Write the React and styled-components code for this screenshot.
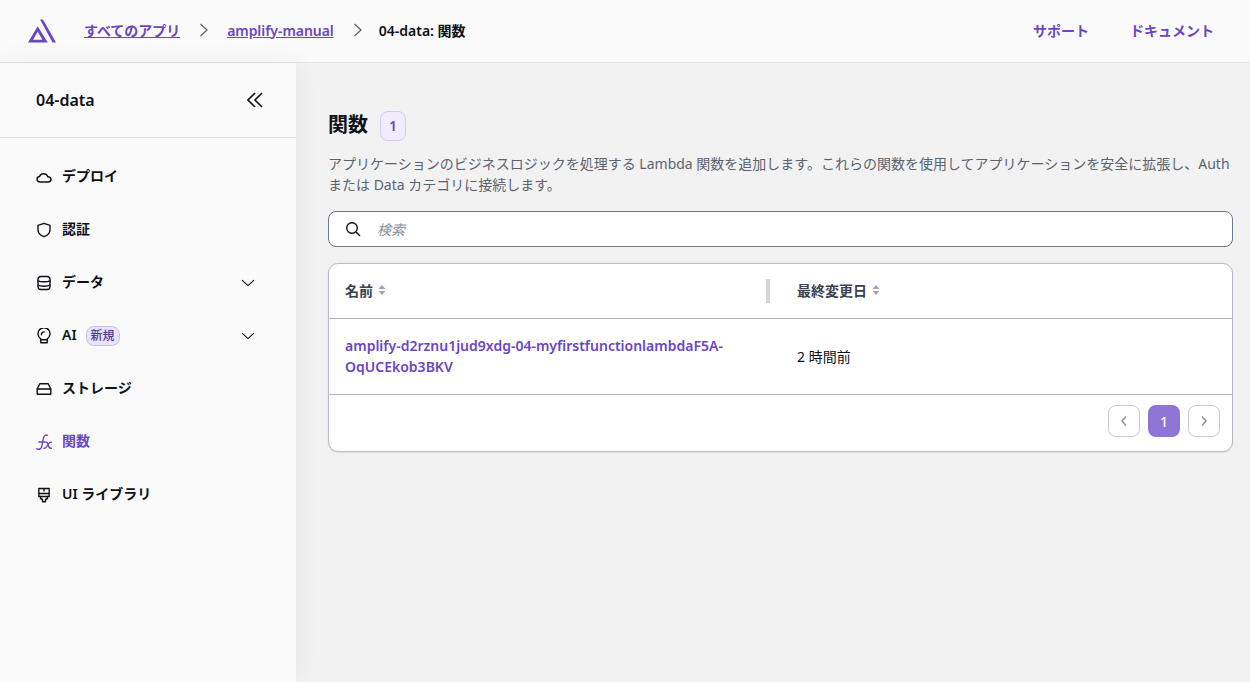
import React from 'react';
import styled, { createGlobalStyle } from 'styled-components';

const GlobalStyle = createGlobalStyle`
  html, body {
    margin: 0;
    height: 100%;
    overflow: hidden;
  }

  body {
    font-family: "Noto Sans", "Noto Sans CJK JP", sans-serif;
    color: #0d1117;
    background: #f2f2f2;
  }

  #root {
    height: 100%;
  }

  * {
    box-sizing: border-box;
  }
`;

const Page = styled.div`
  display: flex;
  flex-direction: column;
  height: 682px;
`;

const Header = styled.header`
  display: flex;
  flex: none;
  align-items: center;
  justify-content: space-between;
  height: 63px;
  padding: 0 36px 2px 28px;
  background: #fafafa;
  border-bottom: 1px solid #e3e3e3;
`;

const HeaderLeft = styled.div`
  display: flex;
  align-items: center;
`;

const Logo = styled.svg`
  display: block;
  width: 28px;
  height: 24px;
  margin: 2px 28px 0 0;
`;

const Crumb = styled.a`
  font-size: 14px;
  font-weight: 600;
  letter-spacing: -0.05px;
  color: #6b46c1;
  text-decoration: underline;
`;

const CurrentCrumb = styled.span`
  margin-left: -2px;
  font-size: 14px;
  font-weight: 600;
  color: #0d1117;
`;

const CrumbSep = styled.svg`
  display: block;
  width: 10px;
  height: 16px;
  margin: 0 18px 0 19px;
`;

const HeaderLinks = styled.nav`
  display: flex;
  gap: 41px;
`;

const HeaderLink = styled.a`
  font-size: 14px;
  font-weight: 600;
  color: #6b46c1;
`;

const Body = styled.div`
  display: flex;
  flex: 1;
  min-height: 0;
`;

const Sidebar = styled.aside`
  position: relative;
  z-index: 1;
  flex: none;
  width: 296px;
  background: #fafafa;
  box-shadow: 0 0 24px rgba(0, 0, 0, 0.06);
`;

const SidebarHead = styled.div`
  display: flex;
  align-items: center;
  justify-content: space-between;
  height: 75px;
  padding: 0 33px 0 36px;
  border-bottom: 1px solid #e3e3e3;
  font-size: 16px;
  font-weight: 600;
`;

const NavList = styled.nav`
  display: flex;
  flex-direction: column;
  padding-top: 12px;
`;

const NavItem = styled.div`
  display: flex;
  align-items: center;
  height: 53px;
  padding: 0 41px 0 36px;
  font-size: 14px;
  font-weight: 600;
  color: ${({ $active }) => ($active ? '#6b46c1' : '#0d1117')};
`;

const NavLabel = styled.span`
  margin-bottom: 3px;
`;

const NavIcon = styled.svg`
  display: block;
  flex: none;
  width: 16px;
  height: 16px;
  margin-right: 10px;
`;

const NewBadge = styled.span`
  margin-left: 9px;
  padding: 0 4px;
  height: 20px;
  line-height: 17px;
  font-size: 12px;
  font-weight: 500;
  color: #4f3a8f;
  background: #e8e3fa;
  border: 1px solid #c9bdf2;
  border-radius: 8px;
`;

const Chevron = styled.svg`
  display: block;
  width: 14px;
  height: 14px;
  margin-left: auto;
`;

const Main = styled.main`
  flex: 1;
  min-width: 0;
  padding: 48px 17px 0 32px;
  background: #f2f2f2;
`;

const TitleRow = styled.div`
  display: flex;
  align-items: center;
  gap: 12px;
  height: 30px;
`;

const Title = styled.h1`
  margin: 0 0 3px;
  font-size: 20px;
  font-weight: 600;
  line-height: 26px;
`;

const CountBadge = styled.span`
  display: flex;
  align-items: center;
  justify-content: center;
  width: 26px;
  height: 30px;
  padding-bottom: 1px;
  font-size: 14px;
  font-weight: 600;
  color: #6b46c1;
  background: #f1edfd;
  border: 1px solid #d5cbf6;
  border-radius: 8px;
`;

const Description = styled.p`
  margin: 12px 0 16px;
  font-size: 14px;
  line-height: 21px;
  color: #5c6370;
`;

const Search = styled.div`
  display: flex;
  align-items: center;
  height: 36px;
  padding: 0 16px;
  background: #fff;
  border: 1px solid #6f7a90;
  border-radius: 8px;
`;

const SearchIcon = styled.svg`
  display: block;
  flex: none;
  width: 16px;
  height: 16px;
  margin-right: 16px;
`;

const SearchText = styled.span`
  margin-bottom: 1px;
  font-size: 14px;
  font-style: italic;
  color: #8a8f98;
`;

const Card = styled.section`
  margin-top: 16px;
  background: #fff;
  border: 1px solid #b8bbc4;
  border-radius: 10px;
  box-shadow: 0 1px 2px rgba(0, 0, 0, 0.08);
  overflow: hidden;
`;

const Row = styled.div`
  display: grid;
  grid-template-columns: 452px 1fr;
  align-items: center;
  height: ${({ $height }) => $height}px;
  padding-bottom: 2px;
  border-bottom: 1px solid #b0b3c0;
`;

const HeadCell = styled.div`
  position: relative;
  display: flex;
  align-items: center;
  gap: 5px;
  padding-left: 16px;
  font-size: 14px;
  font-weight: 600;
  color: #3a4150;
`;

const Divider = styled.span`
  position: absolute;
  top: 50%;
  right: 11px;
  width: 4px;
  height: 24px;
  margin-top: -11px;
  background: #d4d6da;
`;

const SortIcon = styled.svg`
  display: block;
  width: 8px;
  height: 12px;
`;

const NameCell = styled.a`
  padding: 0 40px 0 16px;
  font-size: 14px;
  font-weight: 600;
  line-height: 21px;
  color: #6b46c1;
  overflow-wrap: anywhere;
`;

const DateCell = styled.div`
  padding-left: 16px;
  font-size: 14px;
  color: #0d1117;
`;

const Pager = styled.div`
  display: flex;
  align-items: center;
  justify-content: flex-end;
  gap: 8px;
  height: 56px;
  padding: 0 12px 4px 0;
`;

const PageButton = styled.div`
  display: flex;
  align-items: center;
  justify-content: center;
  width: 32px;
  height: 32px;
  font-size: 14px;
  font-weight: 500;
  color: #fff;
  border-radius: 8px;
  background: ${({ $current }) => ($current ? '#8f75d6' : '#fff')};
  border: ${({ $current }) => ($current ? 'none' : '1px solid #c9cbd2')};
`;

const PageArrow = styled.svg`
  display: block;
  width: 8px;
  height: 12px;
`;

const Stroke = ({ children, as: Comp, ...rest }) => (
  <Comp
    viewBox="0 0 16 16"
    fill="none"
    stroke="currentColor"
    strokeWidth="1.4"
    strokeLinecap="round"
    strokeLinejoin="round"
    {...rest}>
    {children}
  </Comp>
);

const navItems = [
  {
    label: 'デプロイ',
    icon: <path d="M4.2 13C2.3 13 1 11.9 1 10.3 1 8.8 2.100 7.7 3.600 7.500 4.200 5.800 5.800 4.800 7.600 4.800c2 0 3.700 1.200 4.200 3 1.800.1 3.200 1.200 3.200 2.700 0 1.500-1.400 2.500-3 2.500z" />,
  },
  {
    label: '認証',
    icon: <path d="M8 1.400 14 3.300v4.500c0 3.400-2.400 5.800-6 6.900-3.600-1.100-6-3.500-6-6.900V3.300z" />,
  },
  {
    label: 'データ',
    chevron: true,
    icon: (
      <>
        <rect x="2" y="1.500" width="12" height="13" rx="3" />
        <path d="M2 5.800c2 1.300 10 1.300 12 0M2 10.200c2 1.300 10 1.300 12 0" />
      </>
    ),
  },
  {
    label: 'AI',
    badge: '新規',
    chevron: true,
    icon: (
      <>
        <path d="M4.800 10.800A6 6 0 1 1 11.200 10.800V14.800H4.800z" />
        <path d="M4.800 11.800h6.400M5.400 6.800c0-1.700 1.100-2.900 2.800-2.900" />
      </>
    ),
  },
  {
    label: 'ストレージ',
    icon: (
      <>
        <path d="M1.200 8 3.800 2.800h8.400L14.800 8v5.200H1.200z" />
        <path d="M1.200 8h13.600" />
      </>
    ),
  },
  {
    label: '関数',
    active: true,
    icon: (
      <>
        <path d="M11.500 1.300C9.300.3 8 1.800 7.500 4L5.600 12.800C5.100 15 3 15.800.8 14.800M2.800 8h6" />
        <path d="M9.800 8c1.300 0 1.700.8 2.200 2.300l.6 2c.4 1.500 1 2.300 2.800 1.900M15.400 8.200c-1.500-.3-2.300.6-3.200 2l-1.400 2.300c-.8 1.400-1.500 2-2.800 1.700" />
      </>
    ),
  },
  {
    label: 'UI ライブラリ',
    icon: (
      <>
        <path d="M2.800 1.500h10.400v8H2.800zM2.800 6.500h10.400M8 1.500v2.500" />
        <path d="M4.500 9.500v2l2 1v2.200h3v-2.200l2-1v-2" />
      </>
    ),
  },
];

const App = () => (
  <Page>
    <GlobalStyle />
    <Header>
      <HeaderLeft>
        <Logo viewBox="0 0 29 24">
          <path
            fill="#6b46c1"
            fillRule="evenodd"
            d="M12.500 0h3L29 24h-3.500zM10 7 20.500 24H0zM5.200 21h9.800L10 12.800z"
          />
        </Logo>
        <Crumb>すべてのアプリ</Crumb>
        <CrumbSep viewBox="0 0 10 16" fill="none" stroke="#5c6370" strokeWidth="1.300">
          <path d="M1.500 2 8 8l-6.500 6" />
        </CrumbSep>
        <Crumb>amplify-manual</Crumb>
        <CrumbSep viewBox="0 0 10 16" fill="none" stroke="#5c6370" strokeWidth="1.300">
          <path d="M1.500 2 8 8l-6.500 6" />
        </CrumbSep>
        <CurrentCrumb>04-data: 関数</CurrentCrumb>
      </HeaderLeft>
      <HeaderLinks>
        <HeaderLink>サポート</HeaderLink>
        <HeaderLink>ドキュメント</HeaderLink>
      </HeaderLinks>
    </Header>
    <Body>
      <Sidebar>
        <SidebarHead>
          04-data
          <svg width="16" height="16" viewBox="0 0 16 16" fill="none" stroke="#0d1117" strokeWidth="1.600">
            <path d="M8 1 1 8l7 7M15 1 8 8l7 7" />
          </svg>
        </SidebarHead>
        <NavList>
          {navItems.map(item => (
            <NavItem key={item.label} $active={item.active}>
              <Stroke as={NavIcon}>{item.icon}</Stroke>
              <NavLabel>{item.label}</NavLabel>
              {item.badge && <NewBadge>{item.badge}</NewBadge>}
              {item.chevron && (
                <Stroke as={Chevron} strokeWidth="1.200">
                  <path d="M1.500 5 8 11l6.500-6" />
                </Stroke>
              )}
            </NavItem>
          ))}
        </NavList>
      </Sidebar>
      <Main>
        <TitleRow>
          <Title>関数</Title>
          <CountBadge>1</CountBadge>
        </TitleRow>
        <Description>
          アプリケーションのビジネスロジックを処理する Lambda
          関数を追加します。これらの関数を使用してアプリケーションを安全に拡張し、Auth または Data
          カテゴリに接続します。
        </Description>
        <Search>
          <SearchIcon viewBox="0 0 16 16" fill="none" stroke="#0d1117" strokeWidth="1.400">
            <circle cx="7" cy="7" r="5.300" />
            <path d="m11 11 4 4" />
          </SearchIcon>
          <SearchText>検索</SearchText>
        </Search>
        <Card>
          <Row $height={55}>
            <HeadCell>
              名前
              <SortIcon viewBox="0 0 8 12" fill="#9ea3ad">
                <path d="M4 1 7.500 5H.5zM4 11 .5 7h7z" />
              </SortIcon>
              <Divider />
            </HeadCell>
            <HeadCell>
              最終変更日
              <SortIcon viewBox="0 0 8 12" fill="#9ea3ad">
                <path d="M4 1 7.500 5H.5zM4 11 .5 7h7z" />
              </SortIcon>
            </HeadCell>
          </Row>
          <Row $height={76}>
            <NameCell>amplify-d2rznu1jud9xdg-04-myfirstfunctionlambdaF5A-OqUCEkob3BKV</NameCell>
            <DateCell>2 時間前</DateCell>
          </Row>
          <Pager>
            <PageButton>
              <PageArrow viewBox="0 0 8 12" fill="none" stroke="#8a8f98" strokeWidth="1.400">
                <path d="M6 1.500 2 6l4 4.500" />
              </PageArrow>
            </PageButton>
            <PageButton $current>1</PageButton>
            <PageButton>
              <PageArrow viewBox="0 0 8 12" fill="none" stroke="#8a8f98" strokeWidth="1.400">
                <path d="M2 1.500 6 6l-4 4.500" />
              </PageArrow>
            </PageButton>
          </Pager>
        </Card>
      </Main>
    </Body>
  </Page>
);

export default App;
